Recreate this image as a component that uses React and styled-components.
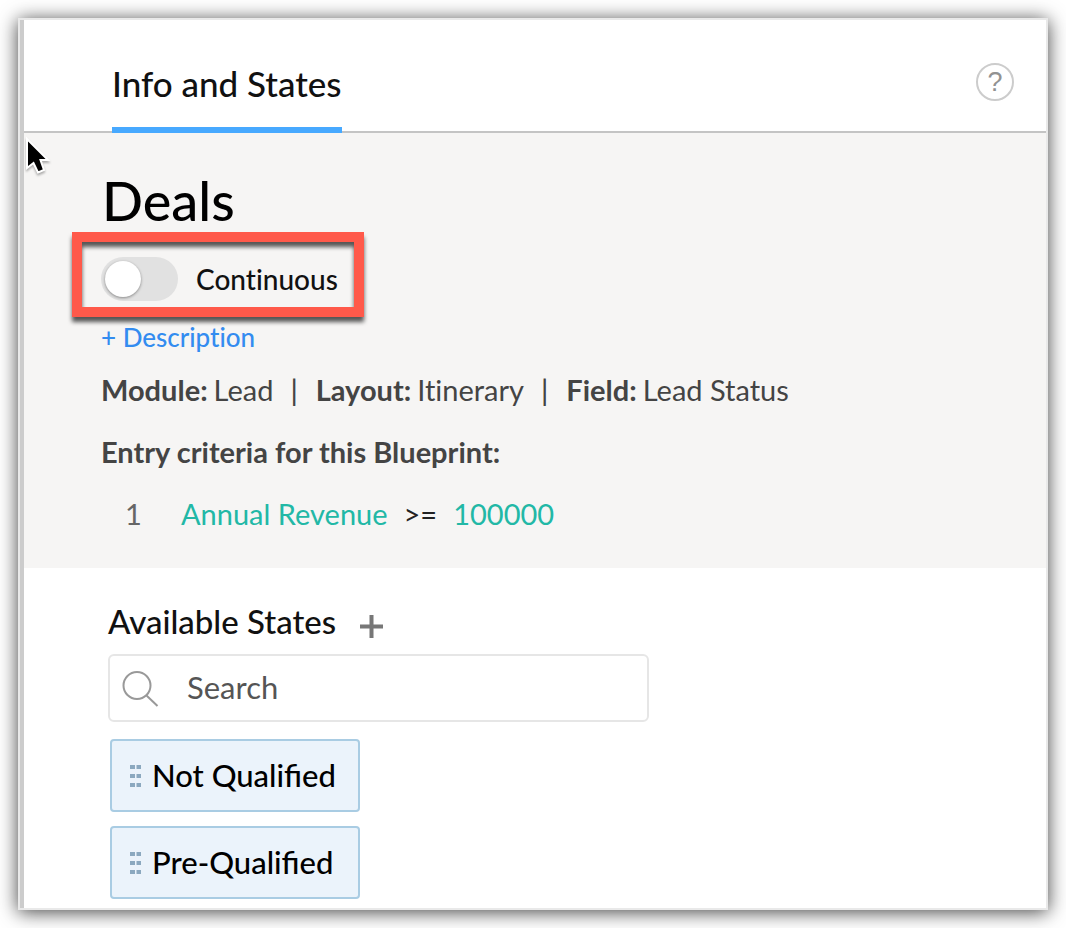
import React, { useState } from "react";
import styled, { createGlobalStyle } from "styled-components";

const GlobalStyle = createGlobalStyle`
  * {
    box-sizing: border-box;
  }
  body {
    margin: 0;
    background: #fff;
    font-family: Lato, "Open Sans", sans-serif;
    color: #444;
  }
  button, input {
    font-family: inherit;
  }
`;

const Page = styled.div`
  display: flex;
  flex-direction: column;
  min-height: 100vh;
  padding: 18px;
`;

const Panel = styled.main`
  position: relative;
  flex: 1;
  background: #fff;
  border: 2px solid #e9e9e9;
  box-shadow: 0 2px 18px rgba(0, 0, 0, 0.75);
`;

const PanelBody = styled.div`
  border-left: 4px solid #ccc;
  height: 100%;
`;

const Header = styled.header`
  display: flex;
  justify-content: space-between;
  align-items: flex-start;
  padding: 0 32px 0 88px;
  border-bottom: 2px solid #c4c4c4;
`;

const Tab = styled.button`
  margin: 0 0 -2px;
  padding: 41px 0 21px;
  border: 0;
  border-bottom: 6px solid #47a9ff;
  background: none;
  color: #111;
  font-size: 35px;
  font-weight: 500;
  line-height: 45px;
  cursor: pointer;
`;

const HelpButton = styled.button`
  width: 38px;
  height: 38px;
  margin-top: 43px;
  padding: 0;
  border: 2px solid #ccc;
  border-radius: 50%;
  background: none;
  color: #929292;
  font-family: "Liberation Sans", Arial, sans-serif;
  font-size: 27px;
  line-height: 34px;
  cursor: pointer;
`;

const Info = styled.section`
  display: flex;
  flex-direction: column;
  align-items: flex-start;
  padding: 36px 32px 35px 77px;
  background: #f6f5f4;
  font-variant-ligatures: none;
`;

const Title = styled.h1`
  margin: 0 0 24px 1px;
  color: #000;
  font-size: 54px;
  font-weight: 500;
  line-height: 64px;
`;

const ToggleRow = styled.label`
  position: relative;
  display: flex;
  align-items: center;
  gap: 18px;
  color: #111;
  font-size: 28px;
  font-weight: 500;
  line-height: 44px;
  cursor: pointer;

  &::after {
    content: "";
    position: absolute;
    inset: -25px -26px -16px -29px;
    border: 10px solid #ff594a;
    filter: drop-shadow(0 5px 2px rgba(0, 0, 0, 0.65));
    pointer-events: none;
  }
`;

const Switch = styled.input`
  appearance: none;
  display: flex;
  align-items: center;
  width: 77px;
  height: 44px;
  margin: 0;
  padding: 4px;
  border-radius: 22px;
  background: #e1e1e1;
  cursor: pointer;

  &::before {
    content: "";
    width: 36px;
    height: 36px;
    border-radius: 50%;
    background: #fff;
    box-shadow: 0 1px 3px rgba(0, 0, 0, 0.4);
  }
  &:checked {
    justify-content: flex-end;
    background: #47a9ff;
  }
`;

const DescriptionLink = styled.a`
  margin-top: 20px;
  color: #338cf0;
  font-size: 26px;
  font-weight: 500;
  line-height: 32px;
  text-decoration: none;
`;

const Meta = styled.p`
  display: flex;
  flex-wrap: wrap;
  margin: 18px 0 0;
  font-size: 29px;
  line-height: 38px;
`;

const MetaItem = styled.span`
  display: flex;

  & + &::before {
    content: "|";
    margin: 0 18px 0 17px;
    font-weight: 500;
  }
  b {
    margin-right: 6px;
  }
`;

const CriteriaTitle = styled.h2`
  margin: 24px 0 0;
  font-size: 29px;
  font-weight: 700;
  line-height: 38px;
`;

const Criteria = styled.ol`
  margin: 24px 0 0;
  padding: 0;
  list-style: none;
  font-size: 29px;
  line-height: 38px;
`;

const Criterion = styled.li`
  display: flex;
  gap: 16px;
  padding-left: 24px;
  color: #222;
`;

const Index = styled.span`
  width: 40px;
  color: #666;
`;

const Value = styled.span`
  color: #22b8a6;
`;

const States = styled.section`
  padding: 31px 32px 9px 84px;
`;

const StatesHead = styled.div`
  display: flex;
  align-items: center;
  gap: 24px;
`;

const StatesTitle = styled.h2`
  margin: 0;
  color: #111;
  font-size: 33px;
  font-weight: 500;
  line-height: 44px;
`;

const AddButton = styled.button`
  display: flex;
  margin: 10px 0 0;
  padding: 0;
  border: 0;
  background: none;
  cursor: pointer;
`;

const SearchBox = styled.label`
  display: flex;
  align-items: center;
  gap: 28px;
  max-width: 541px;
  height: 68px;
  margin-top: 11px;
  padding: 0 12px;
  border: 2px solid #e6e6e6;
  border-radius: 6px;
`;

const SearchInput = styled.input`
  flex: 1;
  min-width: 0;
  padding: 0 0 2px;
  border: 0;
  outline: 0;
  background: none;
  color: #555;
  font-size: 31px;
  line-height: 40px;

  &::placeholder {
    color: #555;
    opacity: 1;
  }
`;

const StateList = styled.ul`
  display: flex;
  flex-direction: column;
  align-items: flex-start;
  gap: 14px;
  margin: 17px 0 0 2px;
  padding: 0;
  list-style: none;
`;

const StateItem = styled.li`
  display: flex;
  align-items: center;
  gap: 11px;
  width: 250px;
  padding: 14px 18px;
  border: 2px solid #a9cce3;
  border-radius: 4px;
  background: #ebf3fb;
  color: #000;
  font-size: 31px;
  font-weight: 500;
  line-height: 41px;
  cursor: grab;
`;

const Pointer = styled.svg`
  position: absolute;
  top: 117px;
  left: 5px;
  filter: drop-shadow(0 2px 1px rgba(0, 0, 0, 0.3));
  pointer-events: none;
`;

const meta = [
  { label: "Module", value: "Lead" },
  { label: "Layout", value: "Itinerary" },
  { label: "Field", value: "Lead Status" },
];

const criteria = [{ field: "Annual Revenue", operator: ">=", value: "100000" }];

const states = ["Not Qualified", "Pre-Qualified"];

const PlusIcon = () => (
  <svg width="23" height="23" viewBox="0 0 23 23" aria-hidden="true">
    <path d="M0 11.5H23M11.5 0V23" stroke="#777" strokeWidth="4" />
  </svg>
);

const SearchIcon = () => (
  <svg width="37" height="37" viewBox="0 0 37 37" fill="none" aria-hidden="true">
    <circle cx="15" cy="15.5" r="13.5" stroke="#999" strokeWidth="2" />
    <path d="M24.5 25.5L35.5 36" stroke="#999" strokeWidth="2" />
  </svg>
);

const GripIcon = () => (
  <svg width="11" height="22" viewBox="0 0 11 22" fill="#8ba8bf" aria-hidden="true">
    {[0, 9, 18].map((y) => (
      <React.Fragment key={y}>
        <rect x="0" y={y} width="5" height="4" />
        <rect x="6.5" y={y} width="4.5" height="4" />
      </React.Fragment>
    ))}
  </svg>
);

const App = () => {
  const [continuous, setContinuous] = useState(false);
  const [search, setSearch] = useState("");

  const filteredStates = states.filter((state) =>
    state.toLowerCase().includes(search.toLowerCase())
  );

  return (
    <Page>
      <GlobalStyle />
      <Panel>
        <PanelBody>
          <Header>
            <Tab type="button">Info and States</Tab>
            <HelpButton type="button" aria-label="Help">
              ?
            </HelpButton>
          </Header>
          <Info>
            <Title>Deals</Title>
            <ToggleRow>
              <Switch
                type="checkbox"
                role="switch"
                checked={continuous}
                onChange={(e) => setContinuous(e.target.checked)}
              />
              Continuous
            </ToggleRow>
            <DescriptionLink href="#description">+ Description</DescriptionLink>
            <Meta>
              {meta.map(({ label, value }) => (
                <MetaItem key={label}>
                  <b>{label}:</b> {value}
                </MetaItem>
              ))}
            </Meta>
            <CriteriaTitle>Entry criteria for this Blueprint:</CriteriaTitle>
            <Criteria>
              {criteria.map(({ field, operator, value }, index) => (
                <Criterion key={field}>
                  <Index>{index + 1}</Index>
                  <Value>{field}</Value>
                  <span>{operator}</span>
                  <Value>{value}</Value>
                </Criterion>
              ))}
            </Criteria>
          </Info>
          <States>
            <StatesHead>
              <StatesTitle>Available States</StatesTitle>
              <AddButton type="button" aria-label="Add state">
                <PlusIcon />
              </AddButton>
            </StatesHead>
            <SearchBox>
              <SearchIcon />
              <SearchInput
                type="text"
                placeholder="Search"
                aria-label="Search"
                value={search}
                onChange={(e) => setSearch(e.target.value)}
              />
            </SearchBox>
            <StateList>
              {filteredStates.map((state) => (
                <StateItem key={state} draggable>
                  <GripIcon />
                  {state}
                </StateItem>
              ))}
            </StateList>
          </States>
        </PanelBody>
        <Pointer width="26" height="38" viewBox="0 0 26 38" aria-hidden="true">
          <path
            d="M2 2V31L8.5 26L13 35.5L19 33L15.5 23H23Z"
            fill="#000"
            stroke="#fff"
            strokeWidth="2"
          />
        </Pointer>
      </Panel>
    </Page>
  );
};

export default App;
